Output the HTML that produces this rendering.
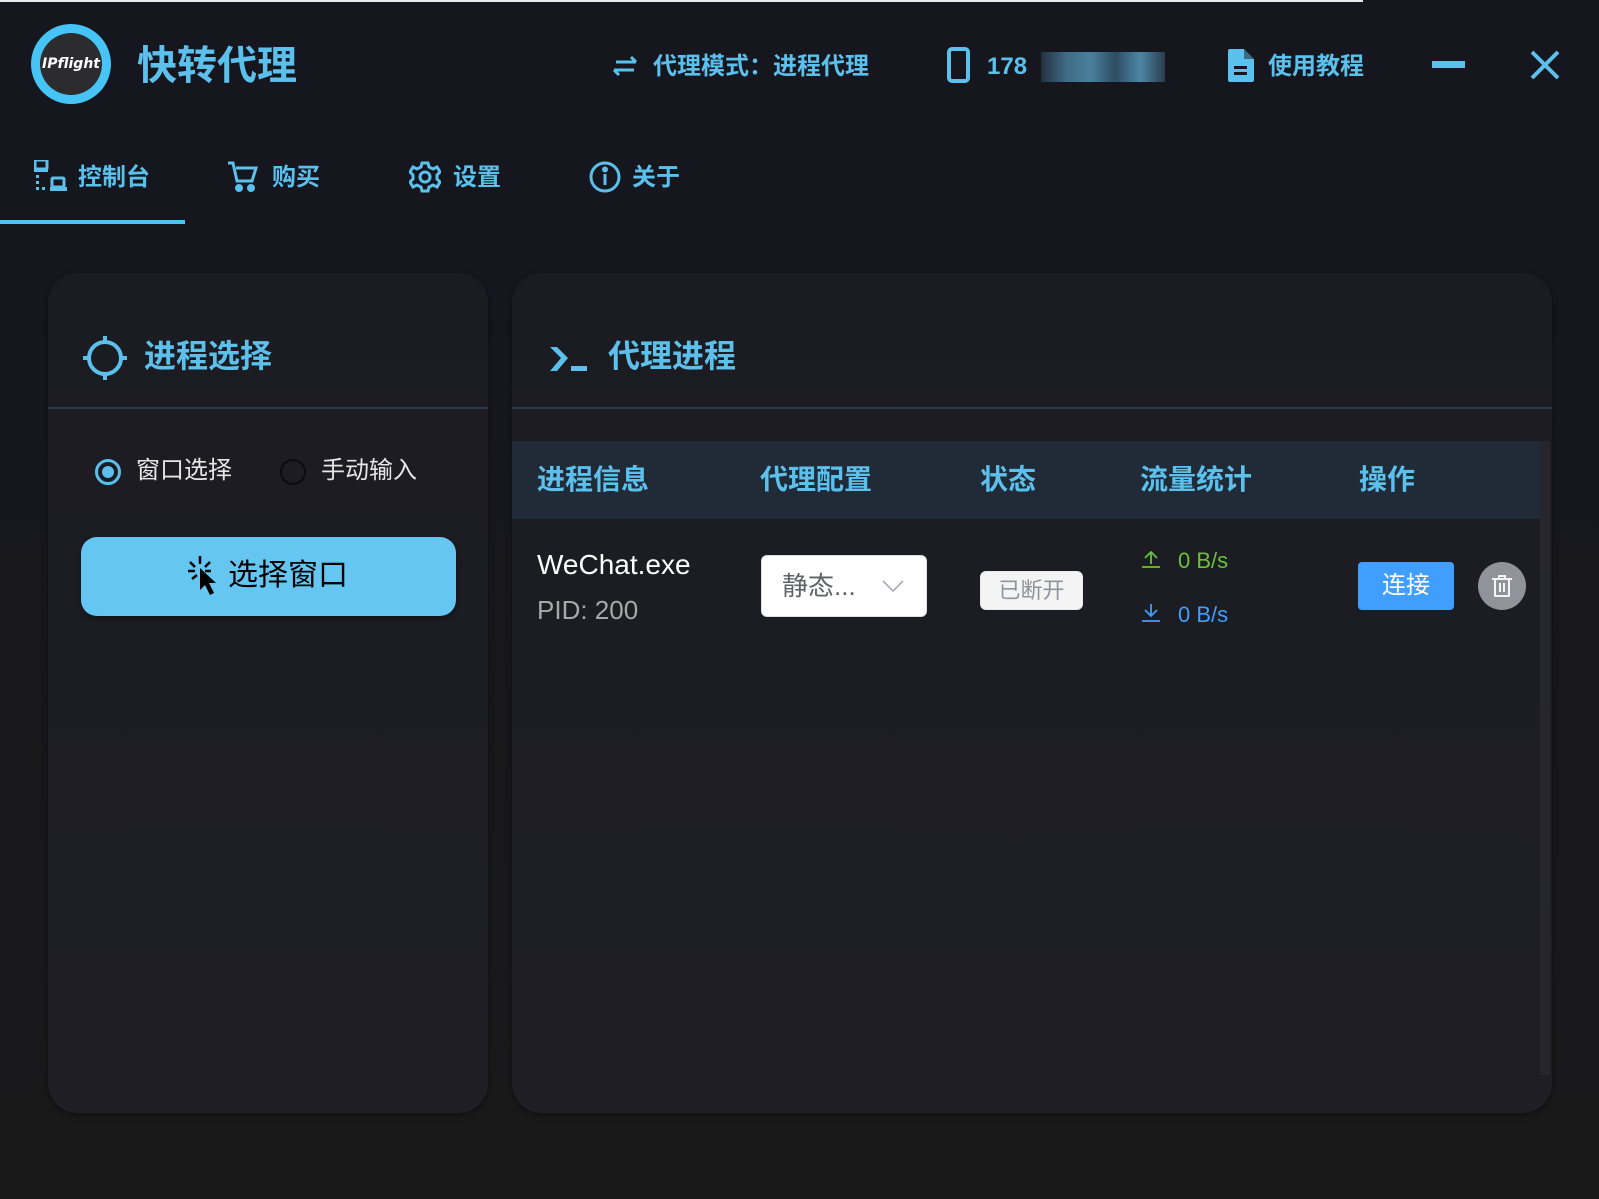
<!DOCTYPE html>
<html><head><meta charset="utf-8"><style>
*{margin:0;padding:0;box-sizing:border-box}
body{width:1599px;height:1199px;overflow:hidden;background:linear-gradient(#15161e 0,#15161e 240px,#17171c 600px,#191919 1199px);font-family:"Liberation Sans","Noto Sans CJK SC",sans-serif;position:relative}
.a{position:absolute}
.c{color:#5bc0eb;font-weight:bold}
.t{white-space:nowrap;line-height:1}
.panel{position:absolute;top:273px;height:840px;background:linear-gradient(#1b1b22,#1e1e24);border-radius:30px;box-shadow:0 2px 6px rgba(0,0,0,.4)}
.div{position:absolute;left:0;right:0;top:134px;height:2px;background:#2b3a4a}
</style></head><body>
<div class="a" style="left:0;top:0;width:1363px;height:2px;background:#e8e8e8"></div>
<!-- logo -->
<div class="a" style="left:31px;top:24px;width:80px;height:80px;border-radius:50%;background:#45c4f5"></div>
<div class="a" style="left:40px;top:33px;width:62px;height:62px;border-radius:50%;background:#2c2c2e"></div>
<div class="a t" style="left:40px;top:56px;width:62px;text-align:center;color:#fff;font:italic bold 14px 'DejaVu Sans',sans-serif">IPflight</div>
<div class="a t c" style="left:137px;top:46px;font-size:40px">快转代理</div>
<!-- mode -->
<svg class="a" style="left:610px;top:54px" width="30" height="24" viewBox="0 0 30 24" fill="none" stroke="#5bc0eb" stroke-width="3"><path d="M6 8h20M21 3l5 5M24 16H4M9 21l-5-5"/></svg>
<div class="a t c" style="left:653px;top:55px;font-size:24px">代理模式：进程代理</div>
<svg class="a" style="left:947px;top:47px" width="24" height="36"><rect x="2" y="2" width="19" height="32" rx="3" fill="none" stroke="#5bc0eb" stroke-width="4"/></svg>
<div class="a t c" style="left:987px;top:55px;font-size:24px">178</div>
<div class="a" style="left:1041px;top:52px;width:124px;height:30px;background:linear-gradient(90deg,#23303e,#3e6a85,#4a7f9c,#2e4d63,#4d86a5,#2a3d4e)"></div>
<svg class="a" style="left:1228px;top:49px" width="26" height="33" viewBox="0 0 26 33"><path d="M2 0h14l10 10v21a2 2 0 0 1-2 2H2a2 2 0 0 1-2-2V2a2 2 0 0 1 2-2z" fill="#5bc0eb"/><path d="M16 0v10h10" fill="#15161e" opacity=".5"/><rect x="6" y="17" width="13" height="3" fill="#15161e"/><rect x="6" y="23" width="13" height="3" fill="#15161e"/></svg>
<div class="a t c" style="left:1268px;top:55px;font-size:24px">使用教程</div>
<div class="a" style="left:1432px;top:61px;width:33px;height:7px;background:#5bc0eb"></div>
<svg class="a" style="left:1530px;top:50px" width="30" height="30"><path d="M2 2l26 26M28 2L2 28" stroke="#5bc0eb" stroke-width="4"/></svg>
<!-- tabs -->
<svg class="a" style="left:34px;top:160px" width="34" height="34" fill="#5bc0eb"><rect x="1" y="0" width="12" height="9" rx="1" fill="none" stroke="#5bc0eb" stroke-width="3"/><rect x="0" y="9" width="14" height="3"/><rect x="2" y="15" width="3" height="3"/><rect x="2" y="21" width="3" height="3"/><rect x="2" y="27" width="3" height="3"/><rect x="8" y="27" width="3" height="3"/><rect x="18" y="18" width="12" height="9" rx="1" fill="none" stroke="#5bc0eb" stroke-width="3"/><rect x="16" y="27" width="17" height="4"/></svg>
<div class="a t c" style="left:78px;top:166px;font-size:24px">控制台</div>
<svg class="a" style="left:228px;top:160px" width="30" height="32" fill="none" stroke="#5bc0eb" stroke-width="3"><path d="M0 3h5l4 18h15l4-13H8"/><circle cx="11" cy="28" r="2.5" fill="#5bc0eb"/><circle cx="23" cy="28" r="2.5" fill="#5bc0eb"/></svg>
<div class="a t c" style="left:272px;top:166px;font-size:24px">购买</div>
<svg class="a" style="left:409px;top:161px" width="32" height="32" viewBox="0 0 32 32" fill="none" stroke="#5bc0eb" stroke-width="3"><path d="M13 2h6l1 4 4 2 4-2 3 5-3 3v4l3 3-3 5-4-2-4 2-1 4h-6l-1-4-4-2-4 2-3-5 3-3v-4L1 11l3-5 4 2 4-2z"/><circle cx="16" cy="16" r="5"/></svg>
<div class="a t c" style="left:453px;top:166px;font-size:24px">设置</div>
<svg class="a" style="left:589px;top:161px" width="32" height="32" fill="none" stroke="#5bc0eb" stroke-width="3"><circle cx="16" cy="16" r="14"/><path d="M16 13v11"/><circle cx="16" cy="8.5" r="1.5" fill="#5bc0eb"/></svg>
<div class="a t c" style="left:632px;top:166px;font-size:24px">关于</div>
<div class="a" style="left:0;top:220px;width:185px;height:4px;background:#45c4f5"></div>
<!-- left panel -->
<div class="panel" style="left:48px;width:440px">
  <svg class="a" style="left:34px;top:62px" width="46" height="46" fill="none" stroke="#5bc0eb" stroke-width="4"><circle cx="23" cy="23" r="16"/><path d="M23 1v8M23 37v8M1 23h8M37 23h8"/></svg>
  <div class="a t c" style="left:96px;top:67px;font-size:32px">进程选择</div>
  <div class="div"></div>
  <div class="a" style="left:47px;top:186px;width:26px;height:26px;border-radius:50%;border:3px solid #5bc0eb"></div>
  <div class="a" style="left:54px;top:193px;width:12px;height:12px;border-radius:50%;background:#5bc0eb"></div>
  <div class="a t" style="left:88px;top:186px;font-size:24px;color:#e6e6e6">窗口选择</div>
  <div class="a" style="left:232px;top:186px;width:26px;height:26px;border-radius:50%;border:2px solid #0c0c0e"></div>
  <div class="a t" style="left:273px;top:186px;font-size:24px;color:#e6e6e6">手动输入</div>
  <div class="a" style="left:33px;top:264px;width:375px;height:79px;border-radius:16px;background:#65c6f1;box-shadow:0 3px 6px rgba(0,0,0,.4)"></div>
  <svg class="a" style="left:140px;top:283px" width="34" height="42" fill="#000"><path d="M12 0v8M2 6l5 5M22 6l-5 5M0 15h7M17 15h6M4 23l5-4" stroke="#000" stroke-width="2.5"/><path d="M12 12l0 22 5-5 5 10 4-2-5-10 7 0z"/></svg>
  <div class="a t" style="left:180px;top:288px;font-size:30px;color:#000">选择窗口</div>
</div>
<!-- right panel -->
<div class="panel" style="left:512px;width:1040px">
  <svg class="a" style="left:36px;top:72px" width="42" height="28" fill="#5bc0eb"><path d="M2 2h7l11 11-11 13H2l11-13z"/><rect x="23" y="21" width="16" height="5"/></svg>
  <div class="a t c" style="left:96px;top:67px;font-size:32px">代理进程</div>
  <div class="div"></div>
  <div class="a" style="left:0;top:168px;width:1028px;height:78px;background:#212a37"></div>
  <div class="a" style="left:1028px;top:168px;width:10px;height:634px;background:#26262c"></div>
  <div class="a t c" style="left:25px;top:193px;font-size:28px">进程信息</div>
  <div class="a t c" style="left:248px;top:193px;font-size:28px">代理配置</div>
  <div class="a t c" style="left:468px;top:193px;font-size:28px">状态</div>
  <div class="a t c" style="left:628px;top:193px;font-size:28px">流量统计</div>
  <div class="a t c" style="left:847px;top:193px;font-size:28px">操作</div>
  <div class="a t" style="left:25px;top:278px;font-size:28px;color:#fff">WeChat.exe</div>
  <div class="a t" style="left:25px;top:324px;font-size:26px;color:#a8a8a8">PID: 200</div>
  <div class="a" style="left:249px;top:282px;width:166px;height:62px;background:#fff;border:1px solid #dcdfe6;border-radius:6px"></div>
  <div class="a t" style="left:270px;top:300px;font-size:26px;color:#606266">静态...</div>
  <svg class="a" style="left:370px;top:306px" width="22" height="14" fill="none" stroke="#a8abb2" stroke-width="1.6"><path d="M1 2l10 10 10-10"/></svg>
  <div class="a" style="left:468px;top:298px;width:103px;height:39px;background:#f4f4f5;border:1px solid #e9e9eb;border-radius:6px"></div>
  <div class="a t" style="left:468px;top:307px;width:103px;text-align:center;font-size:22px;color:#909399">已断开</div>
  <svg class="a" style="left:630px;top:277px" width="18" height="18" fill="none" stroke="#67c23a" stroke-width="1.8"><path d="M9 14V2M3 8l6-6 6 6M0 17h18"/></svg>
  <div class="a t" style="left:666px;top:277px;font-size:22px;color:#67c23a">0 B/s</div>
  <svg class="a" style="left:630px;top:331px" width="18" height="18" fill="none" stroke="#409eff" stroke-width="1.8"><path d="M9 0v12M3 6l6 6 6-6M0 17h18"/></svg>
  <div class="a t" style="left:666px;top:331px;font-size:22px;color:#409eff">0 B/s</div>
  <div class="a" style="left:846px;top:289px;width:96px;height:48px;background:#409eff;border-radius:4px"></div>
  <div class="a t" style="left:846px;top:301px;width:96px;text-align:center;font-size:24px;color:#fff">连接</div>
  <div class="a" style="left:966px;top:289px;width:48px;height:48px;border-radius:50%;background:#909399"></div>
  <svg class="a" style="left:979px;top:301px" width="22" height="24" fill="none" stroke="#fff" stroke-width="1.8"><path d="M1 5h20M8 5V2h6v3M4 5v17h14V5M9 9v9M13 9v9"/></svg>
</div>
</body></html>
